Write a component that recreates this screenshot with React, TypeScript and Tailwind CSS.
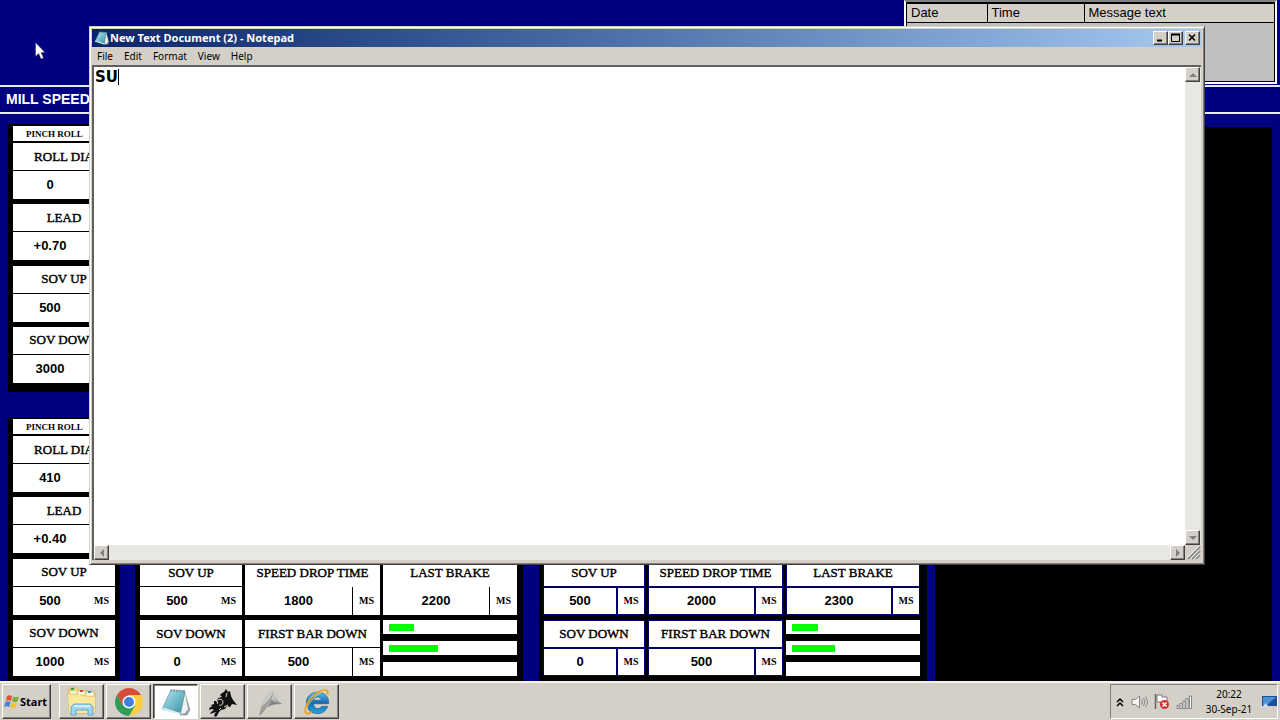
import React from 'react';
import { clsx } from 'clsx';

const RAISED =
  'border border-t-white border-l-white border-r-[#404040] border-b-[#404040] shadow-[inset_-1px_-1px_0_#808080]';

interface ReadingProps {
  label: string;
  value: string;
  unit?: string;
  rule?: boolean;
  split?: boolean;
}

const Reading = ({ label, value, unit = 'MS', rule = true, split = false }: ReadingProps) => (
  <div className="flex h-14 flex-col bg-white">
    <div className={clsx('flex h-7 items-center justify-center border-b', rule ? 'border-black' : 'border-white')}>
      <Label>{label}</Label>
    </div>
    <div className="flex flex-1">
      <Value>{value}</Value>
      <div className={clsx('flex w-7 items-center justify-center border-l', split ? 'border-black' : 'border-white')}>
        <Unit>{unit}</Unit>
      </div>
    </div>
  </div>
);

const BoxedReading = ({ label, value, unit = 'MS' }: ReadingProps) => (
  <div className="flex h-14 flex-col gap-[2px] border border-[#000066] bg-[#000066]">
    <div className="flex h-[26px] items-center justify-center bg-white">
      <Label>{label}</Label>
    </div>
    <div className="flex flex-1 gap-[2px]">
      <div className="flex flex-1 bg-white">
        <Value>{value}</Value>
      </div>
      <div className="flex w-[26px] items-center justify-center bg-white">
        <Unit>{unit}</Unit>
      </div>
    </div>
  </div>
);

const Label = ({ children }: { children: React.ReactNode }) => (
  <span className='whitespace-nowrap font-["Liberation_Serif",serif] text-[13px] leading-4 [-webkit-text-stroke:0.4px_black]'>
    {children}
  </span>
);

const Value = ({ children }: { children: React.ReactNode }) => (
  <span className="flex flex-1 items-center justify-center text-[13px] leading-4 font-bold">{children}</span>
);

const Unit = ({ children }: { children: React.ReactNode }) => (
  <span className='font-["Liberation_Serif",serif] text-[10px] leading-4 font-bold'>{children}</span>
);

const PINCH_ROLLS = [
  { id: 'a', dia: '0', lead: '+0.70', up: '500', down: '3000' },
  { id: 'b', dia: '410', lead: '+0.40', up: '500', down: '1000' },
];

const PinchRoll = ({ roll, last }: { roll: (typeof PINCH_ROLLS)[number]; last: boolean }) => (
  <section className={clsx('flex flex-col gap-[2px] bg-black px-[5px] pt-[2px]', last ? 'pb-[5px]' : 'pb-[9px]')}>
    <h2 className='h-[15px] bg-white pl-[13px] font-["Liberation_Serif",serif] text-[9px] leading-4 font-bold whitespace-nowrap'>
      PINCH ROLL
    </h2>
    <div className="flex h-60 flex-col justify-between">
      <Reading label="ROLL DIA" value={roll.dia} unit="" />
      <Reading label="LEAD" value={roll.lead} unit="" />
      <Reading label="SOV UP" value={roll.up} />
      <Reading label="SOV DOWN" value={roll.down} />
    </div>
  </section>
);

const Bars = ({ widths }: { widths: number[] }) => (
  <div className="flex h-14 flex-col justify-between">
    {widths.map((w, i) => (
      <div key={i} className="h-[14px] bg-white px-[6px] pt-1">
        <div className="h-[7px] bg-[#00ff00]" style={{ width: w }} />
      </div>
    ))}
  </div>
);

const Alarms = () => (
  <div className="mr-[3px] ml-auto h-[84px] w-[373px] border-2 border-t-[#808080] border-r-white border-b-white border-l-white bg-[#c0c0c0]">
    <div className="h-full border border-t-2 border-black">
      <table className="w-full table-fixed border-collapse text-left text-[13px] leading-4">
        <thead>
          <tr className="h-[18px] border-b border-black bg-[#d4d0c8]">
            <th className="w-20 border-r border-black p-0 pl-1 font-normal">Date</th>
            <th className="w-[97px] border-r border-black p-0 pl-1 font-normal">Time</th>
            <th className="p-0 pl-1 font-normal">Message text</th>
          </tr>
        </thead>
      </table>
    </div>
  </div>
);

const MillScreen = () => (
  <main className="flex flex-1 flex-col bg-[#000080]">
    <div className="h-[85px]">
      <Alarms />
    </div>
    <h1 className="h-[29px] border-y-2 border-[#e8e8f0] pl-[6px] text-sm leading-[25px] font-bold text-white">
      MILL SPEED
    </h1>
    <div className="flex flex-1 pr-2 pl-2">
      <div className="flex w-28 flex-col gap-[25px] pt-[10px]">
        {PINCH_ROLLS.map((roll, i) => (
          <PinchRoll key={roll.id} roll={roll} last={i === PINCH_ROLLS.length - 1} />
        ))}
      </div>
      <section className="mt-[13px] ml-[15px] flex flex-col justify-end bg-black pr-[6px] pb-[5px] pl-[5px]">
        <div className="grid grid-cols-[102px_135px_134px] gap-x-[3px] gap-y-[5px]">
          <Reading label="SOV UP" value="500" />
          <Reading label="SPEED DROP TIME" value="1800" rule={false} split />
          <Reading label="LAST BRAKE" value="2200" rule={false} split />
          <Reading label="SOV DOWN" value="0" />
          <Reading label="FIRST BAR DOWN" value="500" split />
          <Bars widths={[25, 49, 0]} />
        </div>
      </section>
      <section className="mt-[13px] ml-4 flex flex-col justify-end bg-black pr-[7px] pb-[5px] pl-1">
        <div className="grid grid-cols-[102px_135px_134px] gap-x-[3px] gap-y-[5px]">
          <BoxedReading label="SOV UP" value="500" />
          <BoxedReading label="SPEED DROP TIME" value="2000" />
          <BoxedReading label="LAST BRAKE" value="2300" />
          <BoxedReading label="SOV DOWN" value="0" />
          <BoxedReading label="FIRST BAR DOWN" value="500" />
          <Bars widths={[26, 43, 0]} />
        </div>
      </section>
      <div className="mt-[13px] ml-2 flex-1 bg-black" />
    </div>
  </main>
);

const NotepadIcon = ({ className }: { className: string }) => (
  <svg viewBox="0 0 32 32" className={className} aria-hidden="true">
    <defs>
      <linearGradient id="page" x1="0" y1="0" x2="1" y2="1">
        <stop offset="0" stopColor="#bfe9ee" />
        <stop offset="0.5" stopColor="#74bccb" />
        <stop offset="1" stopColor="#388da6" />
      </linearGradient>
    </defs>
    <path d="M24 4 30 24 27 29 20 29Z" fill="#9aa6a8" stroke="#7b8687" strokeWidth="0.6" />
    <path d="M25 7 28 23 25 27 21 28Z" fill="#eef2f2" />
    <path d="M11 4 25 5 20 28 2 23Z" fill="url(#page)" stroke="#5d9eae" strokeWidth="0.7" />
    <path d="M2 23 20 29 20.500 27 2.500 21.500Z" fill="#e3f3f5" />
    <path d="M11 3v3M14 3v3M17 3.500v3M20 3.500v3M23 4v3" stroke="#6e7f84" strokeWidth="0.7" />
  </svg>
);

const ScrollButton = ({ label, d }: { label: string; d: string }) => (
  <button aria-label={label} className={clsx('flex size-[15px] items-center justify-center bg-[#d4d0c8]', RAISED)}>
    <svg viewBox="0 0 8 8" className="size-2" aria-hidden="true">
      <path d={d} fill="#808080" />
    </svg>
  </button>
);

const CaptionButton = ({ label, children }: { label: string; children: React.ReactNode }) => (
  <button aria-label={label} className={clsx('flex h-[14px] w-[15px] items-center justify-center bg-[#d4d0c8]', RAISED)}>
    <svg viewBox="0 0 11 10" className="h-[10px] w-[11px]" fill="none" stroke="black" aria-hidden="true">
      {children}
    </svg>
  </button>
);

const Notepad = () => (
  <div className="absolute top-[26px] right-[75px] left-[89px] flex h-[539px] flex-col border border-t-[#d4d0c8] border-r-[#404040] border-b-[#404040] border-l-[#d4d0c8] bg-[#d4d0c8] p-[2px] pr-[3px] pb-1 shadow-[inset_1px_1px_0_white,inset_-1px_-1px_0_#808080]">
    <div className="flex h-[18px] items-center bg-linear-to-r from-[#0a246a] to-[#a6caf0] pr-px pl-[2px]">
      <NotepadIcon className="size-4" />
      <h2 className='flex-1 font-["Noto_Sans",sans-serif] text-[11px] leading-4 font-bold text-white'>
        New Text Document (2) - Notepad
      </h2>
      <CaptionButton label="Minimize">
        <path d="M2 7.500h5" strokeWidth="2" />
      </CaptionButton>
      <CaptionButton label="Maximize">
        <path d="M1.500 1v7.500h8V1" />
        <path d="M1 1.500h9" strokeWidth="2" />
      </CaptionButton>
      <div className="w-[2px]" />
      <CaptionButton label="Close">
        <path d="m2 1.500 6 6m0-6-6 6" strokeWidth="1.600" />
      </CaptionButton>
    </div>
    <nav className='flex h-[18px] items-center gap-[11px] pl-[5px] font-["Noto_Sans",sans-serif] text-[10px] leading-4'>
      {['File', 'Edit', 'Format', 'View', 'Help'].map((item) => (
        <button key={item}>{item}</button>
      ))}
    </nav>
    <div className="flex flex-1 flex-col border-t-2 border-l-2 border-[#606060] bg-[#e8e7e3]">
      <div className="flex flex-1">
        <div className="relative flex flex-1 bg-white">
          <textarea
            aria-label="Document text"
            defaultValue="SU"
            spellCheck={false}
            className='flex-1 resize-none pl-px font-["DejaVu_Sans",sans-serif] text-[15px] leading-5 font-bold outline-none'
          />
          <span className="absolute top-[2px] left-6 h-4 w-px bg-black" />
        </div>
        <div className="flex w-4 flex-col justify-between">
          <ScrollButton label="Scroll up" d="M0 6h8L4 2z" />
          <ScrollButton label="Scroll down" d="M0 2h8L4 6z" />
        </div>
      </div>
      <div className="flex h-[15px] justify-between">
        <ScrollButton label="Scroll left" d="M6 0v8L2 4z" />
        <div className="flex">
          <ScrollButton label="Scroll right" d="M2 0v8l4-4z" />
          <svg viewBox="0 0 16 15" className="h-[15px] w-4 bg-[#d4d0c8]" stroke="#808080" aria-hidden="true">
            <path d="M3 14 15 2M7 14l8-8M11 14l4-4" strokeWidth="1.500" />
            <path d="M2 13 14 1M6 13l8-8M10 13l4-4" stroke="white" strokeWidth="0.800" />
          </svg>
        </div>
      </div>
    </div>
  </div>
);

const ExplorerIcon = () => (
  <svg viewBox="0 0 32 32" className="size-8" aria-hidden="true">
    <path d="M2 6 4 2h7l2 3h14l2 3v19H3z" fill="#f6df86" stroke="#c8a445" strokeWidth="0.7" />
    <path d="M4 5h7v3H4zM12 5h7v4h-7zM20 6h8v4h-8z" fill="#fff8dc" stroke="#bda35b" strokeWidth="0.4" />
    <path d="M5 2h3v2H5z" fill="#2c9a45" />
    <path d="M14 4h3v2h-3z" fill="#d14b2d" />
    <path d="M22 5h3v2h-3z" fill="#3a8cc4" />
    <path d="M2 9h12l2 2h13v16H3z" fill="#fae99c" />
    <path d="M5 29V21l3-3h16l3 3v8h-5v-5H10v5z" fill="#9fd5ef" stroke="#4b9ac7" strokeWidth="0.8" />
    <path d="M8 20h16" stroke="#e3f5fd" strokeWidth="1.500" />
  </svg>
);

const ChromeIcon = () => (
  <svg viewBox="0 0 32 32" className="size-8" aria-hidden="true">
    <path d="M16 9h12.100a14 14 0 0 0-24.200 0l6 10.500z" fill="#d84a3a" />
    <path d="M22.100 19.500 16 30a14 14 0 0 0 12.100-21H16z" fill="#f9cf3f" />
    <path d="M9.900 19.500 3.900 9A14 14 0 0 0 16 30l6.100-10.500z" fill="#2f9c58" />
    <circle cx="16" cy="16" r="6.500" fill="white" />
    <circle cx="16" cy="16" r="5" fill="#4380dc" />
  </svg>
);

const InkIcon = () => (
  <svg viewBox="0 0 32 32" className="size-8" aria-hidden="true">
    <path
      d="M15 7l2-1 2-3 2 3 2-1 1 5 2 4 4 5-5-1-2 3-3-1-2 3-4 1-2 2-2 4-2 1-1-2 2-3-3 1-3 1 1-2 3-2-2-1-3 1 1-3 2 0-1-2 3-1 0-3 3 0 1-3 4-1-2-2z"
      fill="#111"
    />
    <path d="M11 14c2-2 5 0 5 2s-2 4-4 3M20 7l-1 4M17 21l4-2" fill="none" stroke="#b4b1aa" strokeWidth="1.200" />
    <path d="M9 15l2 1-1 2M14 22l-2 2" fill="none" stroke="#d4d0c8" />
  </svg>
);

const SailIcon = () => (
  <svg viewBox="0 0 32 32" className="size-8" aria-hidden="true">
    <defs>
      <linearGradient id="sail" x1="0" y1="0" x2="1" y2="0.600">
        <stop offset="0" stopColor="#777" />
        <stop offset="0.500" stopColor="#d8d8d6" />
        <stop offset="1" stopColor="#777" />
      </linearGradient>
    </defs>
    <path d="M20 4c1 7 3 11 8 14-9 0-17 3-23 12C7 18 12 9 20 4z" fill="url(#sail)" />
    <path d="M20 4c-1 8-5 16-15 26C7 18 12 9 20 4z" fill="#a09f9c" />
    <path d="M20 4c-2 7-7 12-12 16 2-7 6-12 12-16z" fill="#c9c8c4" />
    <path d="M5 30c6-8 12-13 23-12-6-1-9-2-10-5-3 6-7 12-13 17z" fill="#6c6c6c" opacity="0.700" />
  </svg>
);

const ExplorerWebIcon = () => (
  <svg viewBox="-2 -2 36 36" className="size-8" fill="none" aria-hidden="true">
    <defs>
      <linearGradient id="globe" x1="0" y1="0" x2="0" y2="1">
        <stop offset="0" stopColor="#59c1ee" />
        <stop offset="0.500" stopColor="#176bb1" />
        <stop offset="1" stopColor="#2da3dc" />
      </linearGradient>
    </defs>
    <path
      fillRule="evenodd"
      d="M29 18H12c0 6 7 7 9 3h7c-2 5-6 8-11 8C9 29 4 24 4 17S9 5 17 5s13 6 12 13zM12 14h9c-1-5-8-5-9 0z"
      fill="url(#globe)"
      stroke="#12568f"
      strokeWidth="0.700"
    />
    <path d="M28 8c1-4-1-6-5-5C14 4 4 16 3 24c-1 6 3 6 7 3" stroke="#e9a61c" strokeWidth="2" />
    <path d="M27 5c-2-2-8 0-12 4S5 19 4 25" stroke="#ffe17a" strokeWidth="0.900" />
  </svg>
);

const WindowsFlag = () => (
  <svg viewBox="0 0 16 16" className="size-4 shrink-0" aria-hidden="true">
    <path d="M3 2c2-1 3-1 5 0L7 7C5 6 4 6 2 7z" fill="#e5532c" />
    <path d="M9 2.500c2 1 3 1 6 0l-1.500 5c-2 1-4 1-5.500 0z" fill="#76b13b" />
    <path d="M1.500 8c2-1 3-1 5 0l-1.200 5C3.500 12 2 12 0 13z" fill="#4a86cf" />
    <path d="M7.500 8.500c2 1 3 1 5.500 0l-1.300 5c-2 1-4 1-5.500 0z" fill="#f4c133" />
  </svg>
);

const TASKS = [
  { label: 'Windows Explorer', icon: <ExplorerIcon /> },
  { label: 'Google Chrome', icon: <ChromeIcon /> },
  { label: 'Notepad', icon: <NotepadIcon className="size-8" />, active: true },
  { label: 'Graphics', icon: <InkIcon /> },
  { label: 'Runtime', icon: <SailIcon /> },
  { label: 'Internet Explorer', icon: <ExplorerWebIcon /> },
];

const Tray = () => (
  <div className="mr-[2px] ml-auto flex h-[35px] items-center border border-t-[#808080] border-r-white border-b-white border-l-[#808080] pl-1">
    <button aria-label="Show hidden icons" className="w-[10px]">
      <svg viewBox="0 0 10 10" className="size-[10px]" fill="none" stroke="black" strokeWidth="1.500" aria-hidden="true">
        <path d="m2 5 3-3 3 3M2 9l3-3 3 3" />
      </svg>
    </button>
    <svg viewBox="0 0 18 16" className="ml-[6px] h-4 w-[18px]" fill="none" stroke="#858585" aria-hidden="true">
      <path d="M1 5.500h3.500L8.500 2v12l-4-3.500H1z" fill="#f5f5f3" />
      <path d="M10.500 5.500q2 2.500 0 5M12.500 4q3 4 0 8M14.500 2.500q4 5.500 0 11" />
    </svg>
    <svg viewBox="0 0 17 17" className="ml-1 size-[17px]" aria-hidden="true">
      <path d="M2.500 1v15" stroke="#666" strokeWidth="1.500" />
      <path d="M4 2h5v2h5v7H8V9H4z" fill="white" stroke="#777" />
      <circle cx="11.500" cy="11.500" r="4.500" fill="#d93030" />
      <path d="m9.500 9.500 4 4m0-4-4 4" stroke="white" strokeWidth="1.500" />
    </svg>
    <svg viewBox="0 0 17 14" className="ml-[6px] h-[14px] w-[17px]" fill="white" stroke="#777" strokeWidth="0.900" aria-hidden="true">
      <path d="M1 10.500h2v3H1zM4 8.500h2v5H4zM7 6h2v7.500H7zM10 3.500h2v10h-2zM13.500 1h2v12.500h-2z" />
    </svg>
    <div className='ml-3 flex w-[48px] flex-col text-center font-["Noto_Sans",sans-serif] text-[10px] leading-[15px] whitespace-nowrap'>
      <span>20:22</span>
      <span>30-Sep-21</span>
    </div>
    <svg viewBox="0 0 15 12" className="ml-[9px] h-3 w-[15px]" aria-hidden="true">
      <path d="M0 0h15v10H0z" fill="#1c4f98" />
      <path d="M1 1h13L5 9H1z" fill="#4c91d6" />
      <path d="M1 10 4 7l2 3-2 2z" fill="#c6dcf0" />
    </svg>
  </div>
);

const Taskbar = () => (
  <footer className="flex h-[39px] items-center border-t-2 border-[#f4f2ee] bg-[#d4d0c8] pl-[2px]">
    <button className={clsx('flex h-[35px] w-[49px] items-center bg-[#d4d0c8] pl-px', RAISED)}>
      <WindowsFlag />
      <span className='font-["Noto_Sans",sans-serif] text-[11px] leading-4 font-bold'>Start</span>
    </button>
    <div className="ml-2 flex gap-[2px]">
      {TASKS.map((task) => (
        <button
          key={task.label}
          aria-label={task.label}
          className={clsx(
            'flex h-[35px] w-[45px] items-center justify-center',
            task.active
              ? 'border border-t-[#404040] border-r-white border-b-white border-l-[#404040] bg-white shadow-[inset_1px_1px_0_#808080]'
              : ['bg-[#d4d0c8]', RAISED]
          )}
        >
          {task.icon}
        </button>
      ))}
    </div>
    <Tray />
  </footer>
);

export default function App() {
  return (
    <div className='relative flex min-h-screen flex-col overflow-hidden bg-[#000080] font-["Liberation_Sans",sans-serif] text-black'>
      <MillScreen />
      <Taskbar />
      <Notepad />
      <svg viewBox="0 0 12 19" className="absolute top-[42px] left-[35px] h-[19px] w-3" aria-hidden="true">
        <path d="M0.500 0.500v14l3.200-3 2.300 5.500 2.500-1-2.300-5.500H10z" fill="white" stroke="#334" strokeWidth="0.500" />
      </svg>
    </div>
  );
}
